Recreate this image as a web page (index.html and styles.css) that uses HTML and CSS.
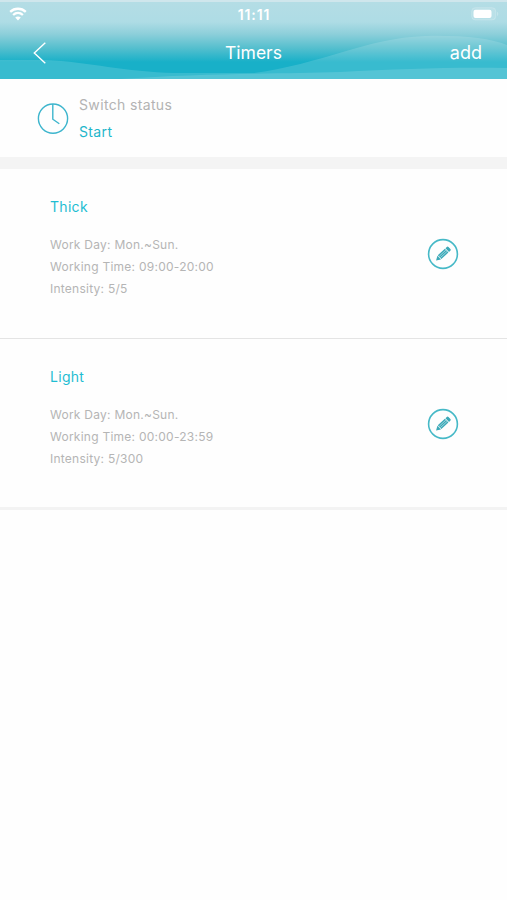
FILE: index.html
```html
<!DOCTYPE html>
<html lang="en">
<head>
    <meta charset="UTF-8">
    <meta name="viewport" content="width=device-width, initial-scale=1.0">
    <title>Timers</title>
    <link rel="stylesheet" href="styles.css">
</head>
<body>
    <header class="header">
        <svg class="header-waves" viewBox="0 0 507 79" preserveAspectRatio="none">
            <path d="M0 60 H45 C90 62 125 72 175 73 H253 C320 65 365 38 425 36 C460 35 490 38 507 45 V79 H0 Z" fill="#fff" fill-opacity="0.14"/>
            <path d="M120 79 C200 73 280 74 340 72 C400 69 450 67 507 68 V79 Z" fill="#fff" fill-opacity="0.14"/>
        </svg>

        <div class="status-bar">
            <svg class="wifi" width="18" height="14" viewBox="0 0 18 14">
                <path d="M1.2 4.9 C5.6 0.7 12.4 0.7 16.8 4.9 M4.1 8 C7 5.3 11 5.3 13.9 8" fill="none" stroke="#fff" stroke-width="2.3"/>
                <path d="M9 13.4 L6.2 10.6 C7.8 9.1 10.2 9.1 11.8 10.6 Z" fill="#fff"/>
            </svg>
            <span class="clock">11:11</span>
            <svg class="battery" width="28" height="14" viewBox="0 0 28 14">
                <rect x="0.7" y="0.7" width="24" height="12.2" rx="3.5" fill="#fff" fill-opacity="0.12" stroke="#fff" stroke-opacity="0.2"/>
                <rect x="2.5" y="2.7" width="18" height="8.4" rx="2" fill="#fff"/>
                <path d="M26 4.8 C27.8 5.4 27.8 8.4 26 9 Z" fill="#fff" fill-opacity="0.25"/>
            </svg>
        </div>

        <div class="nav-bar">
            <svg class="back" width="14" height="22" viewBox="0 0 14 22">
                <path d="M12.3 0.8 L1.3 11 L12.3 21.2" fill="none" stroke="#fff" stroke-width="1.4"/>
            </svg>
            <h1>Timers</h1>
            <span class="add">add</span>
        </div>
    </header>

    <section class="switch-status">
        <svg width="32" height="32" viewBox="0 0 32 32">
            <g fill="none" stroke="#3db5cd" stroke-width="1.4">
                <circle cx="16" cy="16.6" r="14.6"/>
                <path d="M15.8 2 V17.2 L22.3 21.8"/>
            </g>
        </svg>
        <div class="switch-text">
            <p class="label">Switch status</p>
            <p class="value">Start</p>
        </div>
    </section>

    <main class="timers">
        <article class="timer">
            <div class="timer-info">
                <h2>Thick</h2>
                <p>Work Day: Mon.~Sun.</p>
                <p>Working Time: 09:00-20:00</p>
                <p>Intensity: 5/5</p>
            </div>
            <svg class="edit" width="32" height="32" viewBox="0 0 32 32">
                <circle cx="16" cy="16" r="14.4" fill="none" stroke="#46b9c7" stroke-width="1.6"/>
                <g transform="translate(16 16) rotate(-43)">
                    <path d="M-9.5 0 L-5.2 -2.6 V2.6 Z M-4.7 -2.6 H5 V2.6 H-4.7 Z M5.8 -2.6 H7.6 Q8.8 -2.6 8.8 -1.4 V1.4 Q8.8 2.6 7.6 2.6 H5.8 Z" fill="#3ba9b8"/>
                    <path d="M-4.5 -0.9 H4.8 M-4.5 0.9 H4.8" stroke="#b9e2e7" stroke-width="0.7"/>
                </g>
            </svg>
        </article>

        <article class="timer">
            <div class="timer-info">
                <h2>Light</h2>
                <p>Work Day: Mon.~Sun.</p>
                <p>Working Time: 00:00-23:59</p>
                <p>Intensity: 5/300</p>
            </div>
            <svg class="edit" width="32" height="32" viewBox="0 0 32 32">
                <circle cx="16" cy="16" r="14.4" fill="none" stroke="#46b9c7" stroke-width="1.6"/>
                <g transform="translate(16 16) rotate(-43)">
                    <path d="M-9.5 0 L-5.2 -2.6 V2.6 Z M-4.7 -2.6 H5 V2.6 H-4.7 Z M5.8 -2.6 H7.6 Q8.8 -2.6 8.8 -1.4 V1.4 Q8.8 2.6 7.6 2.6 H5.8 Z" fill="#3ba9b8"/>
                    <path d="M-4.5 -0.9 H4.8 M-4.5 0.9 H4.8" stroke="#b9e2e7" stroke-width="0.7"/>
                </g>
            </svg>
        </article>
    </main>
</body>
</html>
```

FILE: styles.css
```css
* {
    box-sizing: border-box;
    margin: 0;
    padding: 0;
}

body {
    font-family: Inter, "Liberation Sans", sans-serif;
    background-color: #fefefe;
    min-height: 100vh;
}

svg {
    display: block;
    flex-shrink: 0;
}

/* Header */
.header {
    position: relative;
    height: 79px;
    color: #fff;
    background: linear-gradient(#b4dde5 0, #aedce5 20px, #8dcfda 32px, #55bfce 46px, #18b0c8 60px, #18b0c8 79px);
    border-top: 2px solid #cfe6ec;
}

.header-waves {
    position: absolute;
    left: 0;
    top: -2px;
    width: 100%;
    height: 79px;
}

.status-bar,
.nav-bar {
    position: relative;
    display: grid;
    grid-template-columns: 1fr auto 1fr;
    align-items: center;
}

.status-bar {
    height: 24px;
    padding: 0 8px 0 9px;
}

.clock {
    font-size: 14px;
    font-weight: 600;
    letter-spacing: 0.9px;
}

.battery {
    justify-self: end;
}

.nav-bar {
    height: 53px;
    padding: 0 25px 0 33px;
}

.nav-bar h1 {
    font-size: 17.5px;
    font-weight: 400;
    margin-left: -8px;
}

.add {
    justify-self: end;
    font-size: 18px;
}

/* Switch status */
.switch-status {
    display: flex;
    align-items: center;
    gap: 10px;
    height: 90px;
    padding: 0 37px;
    border-bottom: 12px solid #f4f4f4;
}

.switch-text {
    font-size: 14px;
    line-height: 27px;
    letter-spacing: 0.35px;
}

.label {
    color: #b3b3b3;
}

.value {
    color: #1fb6cb;
}

/* Timer list */
.timers {
    border-bottom: 3px solid #f3f3f3;
}

.timer {
    display: flex;
    justify-content: space-between;
    align-items: center;
    height: 170px;
    padding: 0 48px 0 50px;
    border-bottom: 1px solid #e4e4e4;
}

.timer:last-child {
    height: 168px;
    padding-top: 1px;
    border-bottom: none;
}

.timer-info {
    padding-bottom: 10px;
}

.timer-info h2 {
    font-size: 14px;
    font-weight: 400;
    line-height: 20px;
    letter-spacing: 0.3px;
    margin-bottom: 17px;
    color: #1fbdd2;
}

.timer-info p {
    font-size: 12px;
    line-height: 22px;
    letter-spacing: 0.25px;
    color: #b5b5b5;
}
```
